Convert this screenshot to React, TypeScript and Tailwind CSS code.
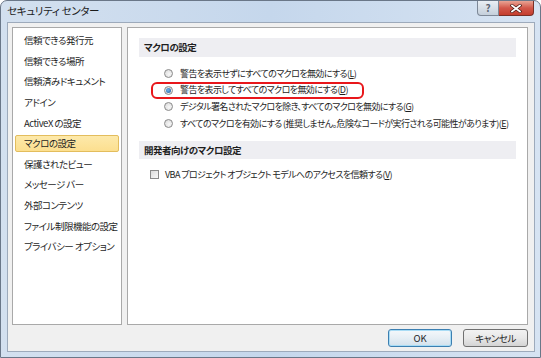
import React from 'react';

const font = "font-['Meiryo_UI','Noto_Sans_CJK_JP',sans-serif] [font-feature-settings:'palt']";

const items = [
  '信頼できる発行元',
  '信頼できる場所',
  '信頼済みドキュメント',
  'アドイン',
  'ActiveX の設定',
  'マクロの設定',
  '保護されたビュー',
  'メッセージ バー',
  '外部コンテンツ',
  'ファイル制限機能の設定',
  'プライバシー オプション',
];

function Radio({ on }: { on?: boolean }) {
  return (
    <span className="flex h-[9px] w-[9px] shrink-0 items-center justify-center rounded-full border border-[#8a8a8a] bg-[radial-gradient(circle_at_60%_60%,#f8f8f8,#d6d6d6)]">
      {on && <span className="h-[5px] w-[5px] rounded-full bg-[radial-gradient(circle_at_40%_40%,#6fb2ea,#1c5a9c)]" />}
    </span>
  );
}

function Opt({ label, k, on, mark }: { label: string; k: string; on?: boolean; mark?: boolean }) {
  return (
    <div className="relative flex h-[16.7px] items-center gap-[7px] pl-[25px]">
      {mark && <span className="absolute left-[12px] top-[0px] h-[17px] w-[213px] rounded-[6px] border-2 border-[#e8171b]" />}
      <Radio on={on} />
      <span className="whitespace-nowrap text-[9px] tracking-[-0.6px]">
        {label}(<span className="underline">{k}</span>)
      </span>
    </div>
  );
}

export default function App() {
  return (
    <div className={`${font} h-[358px] w-[541px] overflow-hidden bg-white text-[9.5px] text-[#1e1e1e]`}>
      <div className="flex h-[358px] w-[541px] flex-col rounded-t-[7px] border border-[#6a7788] bg-gradient-to-r from-[#d3e0ef] via-[#c5d7ec] to-[#d6e3f2]">
        <div className="flex h-[21px] shrink-0 items-start">
          <span className="pl-[6px] pt-[3px] text-[10.5px] leading-[14px] tracking-[-0.3px] text-[#1b1b1b]">セキュリティ センター</span>
          <div className="ml-auto mr-[6px] flex">
            <div className="flex h-[15px] w-[22px] items-center justify-center rounded-bl-[4px] border border-t-0 border-[#7d8897] bg-gradient-to-b from-[#e9eef4] to-[#c4cfdb] text-[10px] font-bold leading-none text-[#5b6573]">
              ?
            </div>
            <div className="flex h-[15px] w-[35px] items-center justify-center rounded-br-[4px] border border-l-0 border-t-0 border-[#7a2f26] bg-gradient-to-b from-[#e8a394] via-[#d2574a] to-[#c43d2d]">
              <svg width="12" height="9" viewBox="0 0 12 9">
                <path d="M2 1.5 L10 7.5 M10 1.5 L2 7.5" stroke="#4a1a14" strokeWidth="3.2" strokeLinecap="square" />
                <path d="M2 1.5 L10 7.5 M10 1.5 L2 7.5" stroke="#ffffff" strokeWidth="1.7" strokeLinecap="square" />
              </svg>
            </div>
          </div>
        </div>
        <div className="ml-[6px] flex h-[330px] w-[528px] flex-col border border-[#9daabb] bg-[#f0f0f0] pl-[4px] pr-[6px] pt-[4px]">
          <div className="flex h-[298px] gap-[5px]">
            <div className="h-[298px] w-[110px] border border-[#a9a9a9] bg-white px-[2px] pt-[2px] tracking-[-0.5px]">
              {items.map((t, i) => (
                <div key={t} className="flex h-[20.6px] items-center py-[1px]">
                  <div
                    className={`flex h-[17px] w-full items-center rounded-[2px] pl-[8px] whitespace-nowrap ${
                      i === 5 ? 'border border-[#e3bd5d] bg-gradient-to-b from-[#fde9aa] to-[#fcdf8f]' : 'border border-transparent'
                    }`}
                  >
                    {t}
                  </div>
                </div>
              ))}
            </div>
            <div className="h-[298px] w-[401px] border border-[#a9a9a9] bg-white px-[11px] pt-[10px]">
              <div className="flex h-[19px] items-center bg-[#eeeef2] pl-[5px] font-semibold tracking-[-0.5px]">マクロの設定</div>
              <div className="pt-[8px]">
                <Opt label="警告を表示せずにすべてのマクロを無効にする" k="L" />
                <Opt label="警告を表示してすべてのマクロを無効にする" k="D" on mark />
                <Opt label="デジタル署名されたマクロを除き、すべてのマクロを無効にする" k="G" />
                <Opt label="すべてのマクロを有効にする (推奨しません。危険なコードが実行される可能性があります)" k="E" />
              </div>
              <div className="mt-[9px] flex h-[18px] items-center bg-[#eeeef2] pl-[5px] font-semibold tracking-[-0.5px]">開発者向けのマクロ設定</div>
              <div className="flex h-[31px] items-center gap-[6px] pl-[11px]">
                <span className="h-[9px] w-[9px] shrink-0 border border-[#8a8a8a] bg-gradient-to-br from-[#dcdcdc] to-[#f8f8f8]" />
                <span className="whitespace-nowrap text-[9px] tracking-[-0.6px]">
                  VBA プロジェクト オブジェクト モデルへのアクセスを信頼する(<span className="underline">V</span>)
                </span>
              </div>
            </div>
          </div>
          <div className="mt-[4px] flex justify-end gap-[11px]">
            <button className="flex h-[18px] w-[64px] items-center justify-center rounded-[3px] border border-[#3c7fb1] bg-gradient-to-b from-[#f4f8fb] via-[#e6eef4] to-[#d3e1ec] shadow-[inset_0_0_0_1px_#a9dcf5]">
              OK
            </button>
            <button className="flex h-[18px] w-[65px] items-center justify-center rounded-[3px] border border-[#707070] bg-gradient-to-b from-[#f2f2f2] via-[#e8e8e8] to-[#d4d4d4] tracking-[-0.5px]">
              キャンセル
            </button>
          </div>
        </div>
      </div>
    </div>
  );
}
